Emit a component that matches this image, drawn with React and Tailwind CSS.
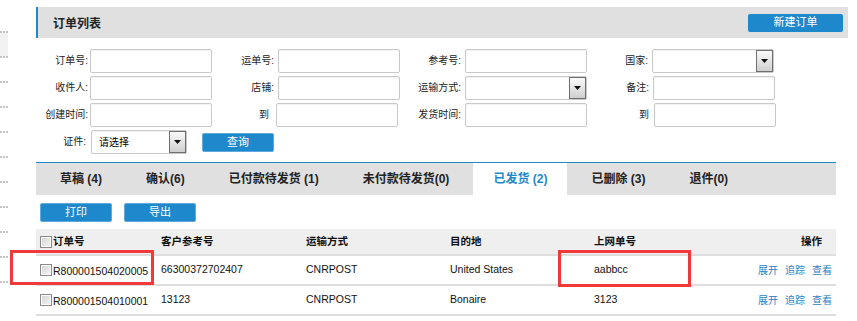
import React from 'react';

const font = "font-['Liberation_Sans','Noto_Sans_CJK_SC',sans-serif]";

function Input({ w = 'w-[122px]' }) {
  return (
    <div className={`${w} h-[24px] bg-white border border-[#c9c9c9] rounded-[2px] shadow-[inset_0_1px_2px_rgba(0,0,0,0.06)]`} />
  );
}

function Select({ w = 'w-[122px]', text = '' }) {
  return (
    <div className={`${w} h-[24px] bg-white border border-[#c9c9c9] rounded-[2px] flex items-stretch shadow-[inset_0_1px_2px_rgba(0,0,0,0.06)]`}>
      <div className="flex-1 flex items-center pl-[7px] text-[10px] text-black">{text}</div>
      <div className="w-[17px] border border-[#6f6f6f] bg-linear-to-b from-[#fafafa] to-[#cfcfcf] flex items-center justify-center">
        <svg width="7" height="4" viewBox="0 0 7 4"><path d="M0 0h7L3.5 4z" fill="#111" /></svg>
      </div>
    </div>
  );
}

function Label({ w, pr = 'pr-[4px]', children }) {
  return (
    <div className={`${w} ${pr} text-right text-[10px] text-[#222] leading-[24px] shrink-0`}>{children}</div>
  );
}

function Checkbox() {
  return (
    <span className="inline-block w-[12px] h-[12px] border border-[#8a8a8a] bg-linear-to-br from-[#d4d4d4] to-[#f6f6f6] shadow-[inset_0_0_0_1px_#fff] shrink-0" />
  );
}

function BlueBtn({ w, children }) {
  return (
    <div className={`${w} h-[19px] bg-[#1e88cc] border border-[#5fa9dc] rounded-[2px] text-white text-[11px] flex items-center justify-center`}>
      {children}
    </div>
  );
}

const tabs = [
  { label: '草稿 (4)' },
  { label: '确认(6)' },
  { label: '已付款待发货 (1)' },
  { label: '未付款待发货(0)' },
  { label: '已发货 (2)', active: true },
  { label: '已删除 (3)' },
  { label: '退件(0)' },
];

const rows = [
  { no: 'R800001504020005', ref: '66300372702407', ship: 'CNRPOST', dest: 'United States', track: 'aabbcc' },
  { no: 'R800001504010001', ref: '13123', ship: 'CNRPOST', dest: 'Bonaire', track: '3123' },
];

const cols = 'grid grid-cols-[125px_145px_144px_144px_156px_86px]';

export default function App() {
  return (
    <div className={`relative w-[857px] h-[321px] overflow-hidden bg-white flex ${font}`}>
      {/* 侧边栏残影 */}
      <div className="w-[8px] pt-[31px] shrink-0">
        {Array.from({ length: 11 }).map((_, i) => (
          <div
            key={i}
            className={`h-[25px] border-t-2 border-dotted border-[#c4c4c4] ${i === 0 ? 'bg-[#f2f2f2]' : ''}`}
          />
        ))}
      </div>

      <div className="ml-[28px] w-[812px] pt-[7px] shrink-0">
        {/* 标题栏 */}
        <div className="h-[31px] bg-[#e0e0e0] border-l-2 border-[#1e88cc] flex items-center justify-between pl-[15px] pr-[5px]">
          <div className="text-[12px] font-bold text-[#222] mt-[3px]">订单列表</div>
          <div className="w-[95px] h-[18px] bg-[#1e88cc] rounded-[2px] text-white text-[11px] flex items-center justify-center">新建订单</div>
        </div>

        {/* 查询条件 */}
        <div className="mt-[11px] flex flex-col gap-[3px]">
          <div className="flex">
            <Label w="w-[54px]" pr="pr-[2px]">订单号:</Label>
            <Input />
            <Label w="w-[66px]">运单号:</Label>
            <Input />
            <Label w="w-[65px]">参考号:</Label>
            <Input />
            <Label w="w-[65px]">国家:</Label>
            <Select />
          </div>
          <div className="flex">
            <Label w="w-[54px]" pr="pr-[2px]">收件人:</Label>
            <Input />
            <Label w="w-[66px]">店铺:</Label>
            <Input />
            <Label w="w-[65px]">运输方式:</Label>
            <Select />
            <Label w="w-[66px]">备注:</Label>
            <Input />
          </div>
          <div className="flex">
            <Label w="w-[54px]" pr="pr-[2px]">创建时间:</Label>
            <Input />
            <Label w="w-[64px]" pr="pr-[7px]">到</Label>
            <Input />
            <Label w="w-[67px]">发货时间:</Label>
            <Input />
            <Label w="w-[67px]" pr="pr-[5px]">到</Label>
            <Input />
          </div>
          <div className="flex items-center">
            <Label w="w-[55px]" pr="pr-[5px]">证件:</Label>
            <Select w="w-[96px]" text="请选择" />
            <div className="ml-[15px]">
              <BlueBtn w="w-[72px]">查询</BlueBtn>
            </div>
          </div>
        </div>

        {/* 标签页 */}
        <div className="mt-[8px] w-[800px] border-t border-[#1e88cc] bg-[#e0e0e0] h-[33px] flex items-stretch pl-[4px] gap-[4px]">
          {tabs.map((t) => (
            <div
              key={t.label}
              className={`px-[20px] flex items-center text-[12px] font-bold ${t.active ? 'bg-white text-[#1e88cc]' : 'text-[#222]'}`}
            >
              {t.label}
            </div>
          ))}
        </div>

        {/* 操作按钮 */}
        <div className="flex gap-[12px] pl-[4px] mt-[8px]">
          <BlueBtn w="w-[72px]">打印</BlueBtn>
          <BlueBtn w="w-[72px]">导出</BlueBtn>
        </div>

        {/* 订单表格 */}
        <div className="mt-[7px] w-[800px] text-[10.5px] text-[#111]">
          <div className={`${cols} h-[27px] bg-[#efefef] border-b-2 border-[#dedede] items-center font-bold`}>
            <div className="pl-[4px] flex items-center gap-[1px]">
              <Checkbox />
              <span>订单号</span>
            </div>
            <div>客户参考号</div>
            <div>运输方式</div>
            <div>目的地</div>
            <div>上网单号</div>
            <div className="text-right pr-[14px]">操作</div>
          </div>
          {rows.map((r) => (
            <div key={r.no} className={`${cols} h-[30px] border-b-2 border-[#dedede] items-center`}>
              <div className="pl-[4px] flex items-center gap-[1px]">
                <Checkbox />
                <span className="mt-[3px]">{r.no}</span>
              </div>
              <div>{r.ref}</div>
              <div>{r.ship}</div>
              <div>{r.dest}</div>
              <div>{r.track}</div>
              <div className="flex justify-end gap-[7px] pr-[4px] text-[10px] text-[#2a7fc8]">
                <span>展开</span>
                <span>追踪</span>
                <span>查看</span>
              </div>
            </div>
          ))}
        </div>
      </div>

      {/* 红色标注框 */}
      <div className="absolute left-[10px] top-[250px] w-[144px] h-[35px] border-[3px] border-[#f03a3a]" />
      <div className="absolute left-[558px] top-[250px] w-[133px] h-[37px] border-[3px] border-[#f03a3a]" />
    </div>
  );
}
